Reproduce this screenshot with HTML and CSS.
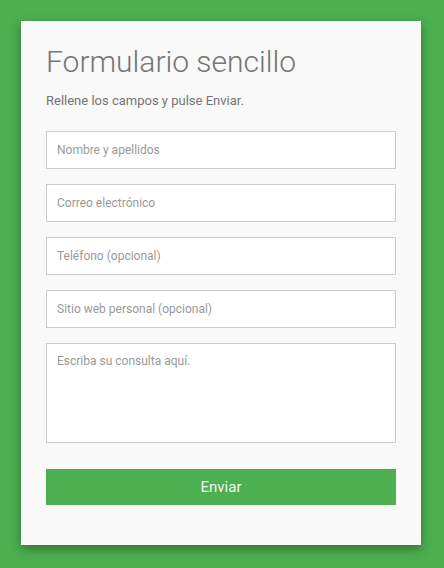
FILE: index.html
```html
<!DOCTYPE html>
<html lang="es">
<head>
<meta charset="utf-8">
<link rel="stylesheet" href="styles.css">
</head>
<body>
<div class="card">
  <h1 class="title">Formulario sencillo</h1>
  <p class="lead">Rellene los campos y pulse Enviar.</p>
  <form class="form">
    <input class="field" type="text" placeholder="Nombre y apellidos">
    <input class="field" type="text" placeholder="Correo electrónico">
    <input class="field" type="text" placeholder="Teléfono (opcional)">
    <input class="field" type="text" placeholder="Sitio web personal (opcional)">
    <textarea class="field area" placeholder="Escriba su consulta aquí."></textarea>
    <button class="send" type="button">Enviar</button>
  </form>
</div>
</body>
</html>
```

FILE: styles.css
```css
html, body {
  margin: 0;
  padding: 0;
}
body {
  background: #4caf50;
  font-family: Roboto, "Liberation Sans", sans-serif;
  padding: 21px;
  height: 568px;
  box-sizing: border-box;
}
.card {
  width: 400px;
  box-sizing: border-box;
  background: #f9f9f9;
  padding: 23px 25px 40px;
  box-shadow: 0 4px 10px rgba(0, 0, 0, 0.35);
}
.title {
  margin: 0;
  font-size: 30px;
  font-weight: 300;
  color: #757575;
  line-height: normal;
}
.lead {
  margin: 14px 0 0;
  font-size: 13px;
  color: #757575;
  line-height: normal;
}
.form {
  margin-top: 23px;
  display: flex;
  flex-direction: column;
  gap: 15px;
}
.field {
  display: block;
  width: 100%;
  box-sizing: border-box;
  height: 38px;
  border: 1px solid #ccc;
  background: #fff;
  padding: 0 10px;
  font-family: Roboto, "Liberation Sans", sans-serif;
  font-size: 12px;
  color: #333;
  outline: none;
  margin: 0;
}
.field::placeholder {
  color: #999;
}
.area {
  height: 100px;
  padding: 10px;
  resize: none;
}
.send {
  margin-top: 11px;
  height: 36px;
  border: 0;
  background: #4caf50;
  color: #f4f4f4;
  font-family: Roboto, "Liberation Sans", sans-serif;
  font-size: 15px;
  cursor: pointer;
}
```
